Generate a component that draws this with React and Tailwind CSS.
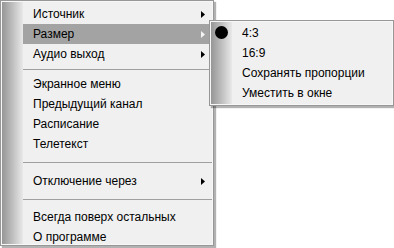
import React from "react";

const font = { fontFamily: '"Liberation Sans", Arial, sans-serif' };

function Arrow({ light }) {
  return (
    <svg width="4" height="7" viewBox="0 0 4 7" className="shrink-0">
      <polygon points="0,0 4,3.5 0,7" fill={light ? "#f4f4f4" : "#000"} />
    </svg>
  );
}

function Item({ label, sub, active }) {
  return (
    <div
      className={
        "h-[20px] flex items-center justify-between pl-[10px] pr-[7px] text-[12px] text-black " +
        (active ? "bg-[#a3a3a3]" : "")
      }
    >
      <span>{label}</span>
      {sub && <Arrow light={active} />}
    </div>
  );
}

function Sep({ h, top }) {
  return (
    <div className="flex flex-col" style={{ height: h }}>
      <div style={{ height: top }} />
      <div className="h-px bg-[#a0a0a0]" />
    </div>
  );
}

export default function App() {
  return (
    <div className="relative w-[394px] h-[248px] bg-white overflow-hidden" style={font}>
      {/* main menu */}
      <div className="w-[214px] h-[246px] border border-[#979797] shadow-[2px_2px_1px_rgba(0,0,0,0.3)]">
        <div className="h-full flex p-px bg-[#f7f7f7]">
          <div className="w-[21px] bg-gradient-to-r from-[#969696] to-[#e9e9e9]" />
          <div className="flex-1 bg-[#f0f0f0] pt-[2px]">
            <Item label="Источник" sub />
            <Item label="Размер" sub active />
            <Item label="Аудио выход" sub />
            <Sep h={10} top={5} />
            <Item label="Экранное меню" />
            <Item label="Предыдущий канал" />
            <Item label="Расписание" />
            <Item label="Телетекст" />
            <Sep h={17} top={8} />
            <Item label="Отключение через" sub />
            <Sep h={16} top={8} />
            <Item label="Всегда поверх остальных" />
            <Item label="О программе" />
          </div>
        </div>
      </div>

      {/* submenu */}
      <div className="absolute left-[209px] top-[20px] w-[185px] h-[86px] border border-[#979797] shadow-[2px_2px_1px_rgba(0,0,0,0.3)]">
        <div className="h-full flex p-px bg-[#f7f7f7]">
          <div className="w-[21px] bg-gradient-to-r from-[#969696] to-[#e9e9e9]" />
          <div className="flex-1 bg-[#f0f0f0] pt-px text-[12px] text-black">
            <div className="relative h-[20px] flex items-center pl-[10px]">
              <span className="absolute left-[-17px] top-[3px] w-[13px] h-[13px] rounded-full bg-black" />
              4:3
            </div>
            <div className="h-[20px] flex items-center pl-[10px]">16:9</div>
            <div className="h-[20px] flex items-center pl-[10px]">Сохранять пропорции</div>
            <div className="h-[20px] flex items-center pl-[10px]">Уместить в окне</div>
          </div>
        </div>
      </div>
    </div>
  );
}
